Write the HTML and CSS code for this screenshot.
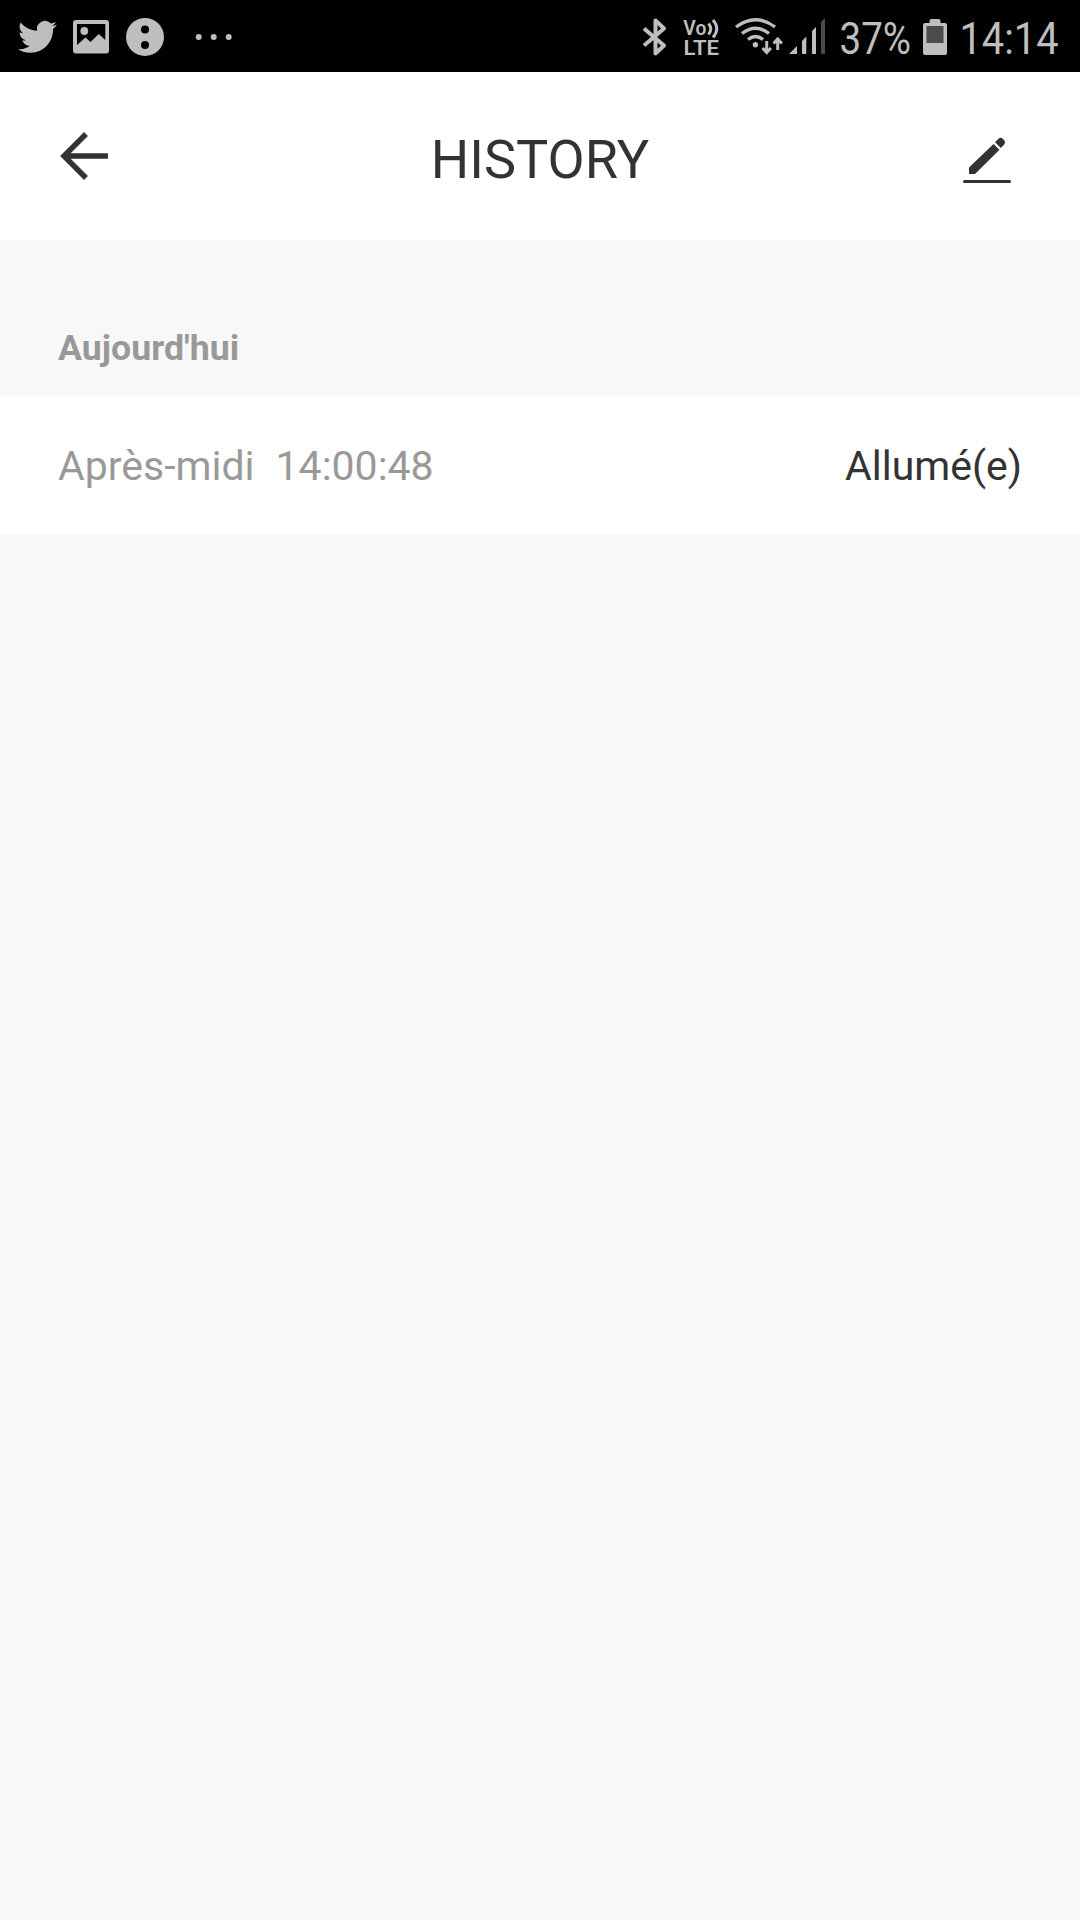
FILE: index.html
```html
<!DOCTYPE html>
<html lang="fr">
<head>
    <meta charset="UTF-8">
    <meta name="viewport" content="width=device-width, initial-scale=1.0">
    <title>History</title>
    <link rel="stylesheet" href="styles.css">
</head>
<body>
    <div class="status-bar">
        <div class="status-left">
            <!-- twitter -->
            <svg width="48" height="72" viewBox="17 0 48 72">
                <path transform="translate(18 17.4) scale(1.625)" d="M23.953 4.57a10 10 0 01-2.825.775 4.958 4.958 0 002.163-2.723c-.951.555-2.005.959-3.127 1.184a4.92 4.92 0 00-8.384 4.482C7.69 8.095 4.067 6.13 1.64 3.162a4.822 4.822 0 00-.666 2.475c0 1.71.87 3.213 2.188 4.096a4.904 4.904 0 01-2.228-.616v.06a4.923 4.923 0 003.946 4.827 4.996 4.996 0 01-2.212.085 4.936 4.936 0 004.604 3.417 9.867 9.867 0 01-6.102 2.105c-.39 0-.779-.023-1.17-.067a13.995 13.995 0 007.557 2.209c9.053 0 13.998-7.496 13.998-13.985 0-.21 0-.42-.015-.63A9.935 9.935 0 0024 4.59z"/>
            </svg>
            <!-- picture -->
            <svg width="54" height="72" viewBox="65 0 54 72">
                <path fill-rule="evenodd" d="M76 20h30q3 0 3 3v27.500q0 3-3 3H76q-3 0-3-3V23q0-3 3-3zM77 24v21l8.500-7.500 5 4.500 8.300-8 6.500 6V24z"/>
                <circle cx="84.300" cy="31" r="3.900"/>
            </svg>
            <!-- two dots -->
            <svg width="64" height="72" viewBox="119 0 64 72">
                <circle cx="145" cy="37" r="19"/>
                <circle class="hole" cx="145" cy="29.500" r="4"/>
                <circle class="hole" cx="145" cy="45" r="4"/>
            </svg>
            <!-- more -->
            <svg width="56" height="72" viewBox="183 0 56 72">
                <circle cx="198.700" cy="37" r="3"/>
                <circle cx="213.700" cy="37" r="3"/>
                <circle cx="228.700" cy="37" r="3"/>
            </svg>
        </div>
        <div class="status-right">
            <!-- bluetooth -->
            <svg width="36" height="72" viewBox="640 0 36 72">
                <path class="line bold" d="M644 28.500L664 45.500L655.500 53.500V20.500L664 28.500L644 45.500"/>
            </svg>
            <!-- volte -->
            <svg width="54" height="72" viewBox="676 0 54 72">
                <text class="lte" x="683.300" y="34.500" textLength="23" lengthAdjust="spacingAndGlyphs">Vo</text>
                <text class="lte" x="683.500" y="54.500" textLength="35.500" lengthAdjust="spacingAndGlyphs">LTE</text>
                <path class="line thin" d="M708.500 23.500q4.500 5.500 0 11M713 20q7.500 8.500 0 17.500"/>
            </svg>
            <!-- wifi -->
            <svg width="56" height="72" viewBox="730 0 56 72">
                <path class="line" d="M736 27Q755.500 12.500 775 27M742 33.500Q755.500 23 769 33.500M748 39.500Q755.500 33.500 763 39.500"/>
                <circle cx="755.400" cy="44.700" r="2.700"/>
                <path class="line thin" d="M766.700 41v11M762.500 48l4.200 4.500 4.200-4.500M777.700 50V39.500M773.500 43.500l4.200-4.500 4.200 4.500"/>
            </svg>
            <!-- signal -->
            <svg width="50" height="72" viewBox="786 0 50 72">
                <path d="M789 54l8-8v8zM802 54V41l4.300-4.500V54zM812 54V31l4-4v27z"/>
                <path class="dim" d="M821 54V22l4-4v36z"/>
            </svg>
            <!-- battery -->
            <svg width="118" height="72" viewBox="836 0 118 72">
                <text class="clock" x="839.500" y="54" textLength="71.500" lengthAdjust="spacingAndGlyphs">37%</text>
                <path d="M929.500 23v-2q0-2 2-2h7q2 0 2 2v2h4.500q2 0 2 2v28q0 2-2 2h-20q-2 0-2-2V25q0-2 2-2z"/>
                <path class="dim" d="M926.500 26h17v17h-17z"/>
            </svg>
            <svg width="126" height="72" viewBox="954 0 126 72">
                <text class="clock" x="959.500" y="54" textLength="99" lengthAdjust="spacingAndGlyphs">14:14</text>
            </svg>
        </div>
    </div>

    <header class="header">
        <button class="icon-btn" aria-label="Retour">
            <svg width="48" height="50" viewBox="0 0 48 50">
                <path class="arrow" d="M48 25H5M26 3L4 25L26 47"/>
            </svg>
        </button>
        <h1 class="title">HISTORY</h1>
        <button class="icon-btn" aria-label="Modifier">
            <svg width="48" height="54" viewBox="963 129 48 54">
                <path d="M969 174v-6.500L993.500 144l6 5.800L975 174zM995 142.200l3-3q2.400-2.400 4.800-.500l1.200 1.200q2 2.300 0 4.900l-3.200 3.300z"/>
                <rect x="963" y="180" width="48" height="3" rx="1.500"/>
            </svg>
        </button>
    </header>

    <main>
        <h2 class="day">Aujourd'hui</h2>
        <div class="entry">
            <div class="entry-time"><span>Après-midi</span><span>14:00:48</span></div>
            <div class="entry-state">Allumé(e)</div>
        </div>
    </main>
</body>
</html>
```

FILE: styles.css
```css
* {
    margin: 0;
    padding: 0;
    box-sizing: border-box;
}

body {
    min-height: 100vh;
    background: #f8f8f8;
    color: #333;
    font-family: Roboto, sans-serif;
}

svg {
    display: block;
}

.status-bar {
    height: 72px;
    background: #000;
    display: flex;
    justify-content: space-between;
    padding-left: 17px;
}

.status-left,
.status-right {
    display: flex;
    fill: #bebebe;
}

.hole {
    fill: #000;
}

.dim {
    fill: #4b4b4b;
}

.line {
    fill: none;
    stroke: #bebebe;
    stroke-width: 3.4;
}

.line.bold {
    stroke-width: 4;
    stroke-linejoin: round;
}

.line.thin {
    stroke-width: 3;
}

.lte {
    font-size: 20.5px;
    font-weight: 600;
}

.clock {
    font-size: 45px;
}

.header {
    height: 168px;
    background: #fff;
    display: flex;
    align-items: center;
    justify-content: space-between;
    padding: 0 69px 0 60px;
}

.icon-btn {
    border: none;
    background: none;
    fill: #333;
}

.arrow {
    fill: none;
    stroke: #333;
    stroke-width: 5.5;
}

.title {
    font-size: 54px;
    font-weight: 400;
    line-height: 64px;
    padding: 8px 0 0 9px;
}

.day {
    height: 155px;
    padding: 87px 58px 0;
    color: #999;
    font-size: 35.7px;
    font-weight: 700;
    line-height: 42px;
}

.entry {
    height: 139px;
    background: #fff;
    display: flex;
    align-items: center;
    justify-content: space-between;
    padding: 3px 58px 0;
    font-size: 41px;
}

.entry-time {
    display: flex;
    gap: 21px;
    color: #999;
}
```
